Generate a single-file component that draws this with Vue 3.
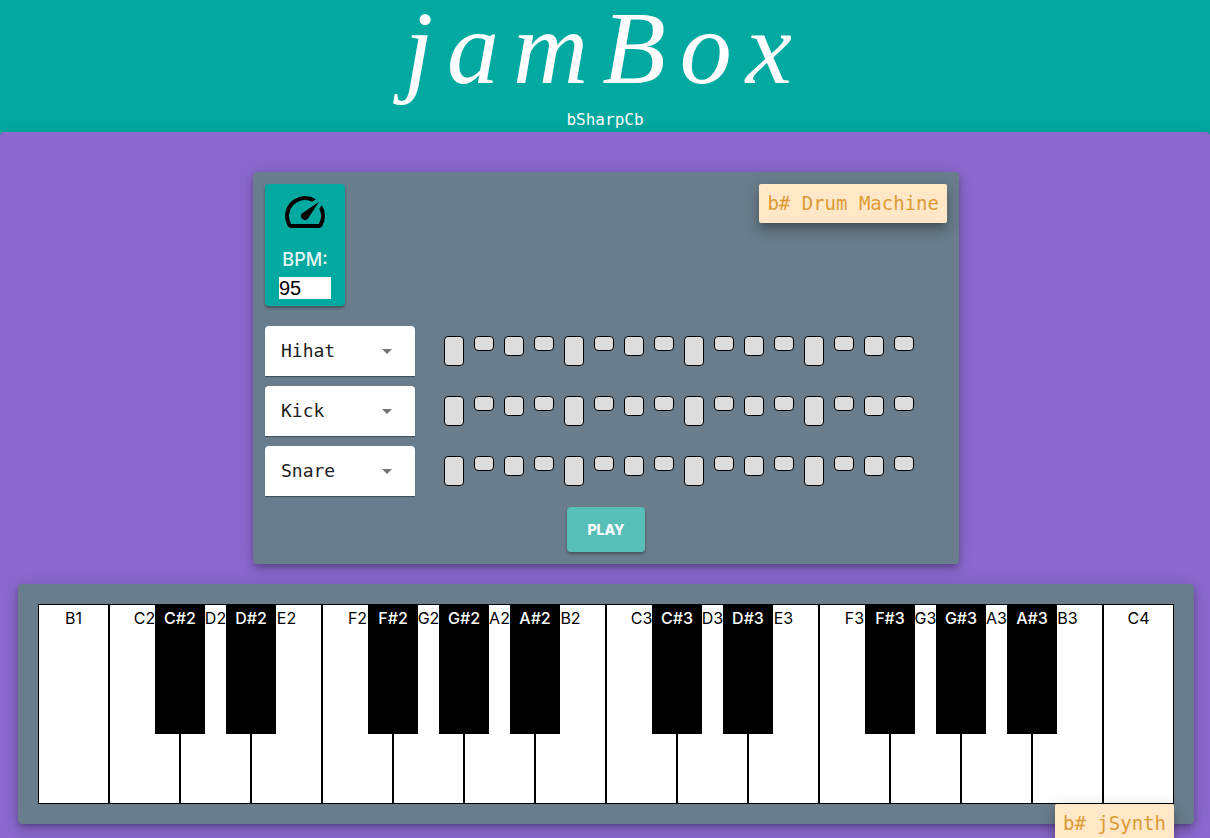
<script setup>
import { reactive, ref } from 'vue'

const bpm = ref(95)
const playing = ref(false)
const sounds = ['Hihat', 'Kick', 'Snare']
const beatSizes = ['long', 'short', 'mid', 'short']

const tracks = reactive(
  sounds.map((sound) => ({ sound, steps: Array(16).fill(false) }))
)

const naturals = [
  'B1', 'C2', 'D2', 'E2', 'F2', 'G2', 'A2', 'B2',
  'C3', 'D3', 'E3', 'F3', 'G3', 'A3', 'B3', 'C4'
]
const lastNote = naturals[naturals.length - 1]
const keys = naturals.map((note) => ({
  note,
  sharp: 'CDFGA'.includes(note[0]) && note !== lastNote ? `${note[0]}#${note[1]}` : null
}))
</script>

<template>
  <div class="app">
    <header class="header">
      <h1 class="logo">jamBox</h1>
      <p class="byline">bSharpCb</p>
    </header>

    <main class="main">
      <section class="panel drums">
        <div class="drums-top">
          <div class="tempo">
            <svg class="tempo-icon" viewBox="0 0 24 24" aria-hidden="true">
              <path d="m20.38 8.57-1.23 1.85a8 8 0 0 1-.22 7.58H5.07A8 8 0 0 1 15.58 6.85l1.85-1.23A10 10 0 0 0 3.35 19a2 2 0 0 0 1.72 1h13.85a2 2 0 0 0 1.74-1 10 10 0 0 0-.27-10.44zm-9.79 6.84a2 2 0 0 0 2.83 0l5.66-8.49-8.49 5.66a2 2 0 0 0 0 2.83z" />
            </svg>
            <label class="tempo-label" for="bpm">BPM:</label>
            <input id="bpm" v-model="bpm" class="tempo-input" type="number" />
          </div>
          <h2 class="tag">b# Drum Machine</h2>
        </div>

        <div class="tracks">
          <div v-for="(track, t) in tracks" :key="t" class="track">
            <div class="sound">
              <select v-model="track.sound" class="sound-select" :aria-label="`Sound ${t + 1}`">
                <option v-for="s in sounds" :key="s">{{ s }}</option>
              </select>
              <svg class="sound-arrow" viewBox="0 0 24 24" aria-hidden="true">
                <path d="M7 10l5 5 5-5z" />
              </svg>
            </div>
            <div class="steps">
              <button
                v-for="(on, i) in track.steps"
                :key="i"
                type="button"
                class="step"
                :class="[beatSizes[i % 4], { on }]"
                :aria-label="`Track ${t + 1} step ${i + 1}`"
                @click="track.steps[i] = !on"
              ></button>
            </div>
          </div>
        </div>

        <button type="button" class="play" @click="playing = !playing">PLAY</button>
      </section>

      <section class="panel synth">
        <div class="keyboard">
          <div v-for="k in keys" :key="k.note" class="slot">
            <button type="button" class="key">{{ k.note }}</button>
            <button v-if="k.sharp" type="button" class="sharp">{{ k.sharp }}</button>
          </div>
        </div>
        <h2 class="tag synth-tag">b# jSynth</h2>
      </section>
    </main>
  </div>
</template>

<style>
body {
  margin: 0;
  background: #8b68ce;
}
</style>

<style scoped>
.app {
  min-height: 100vh;
  display: flex;
  flex-direction: column;
  background: #02a9a1;
  font-family: Inter, "Liberation Sans", sans-serif;
}

.header {
  display: flex;
  flex-direction: column;
  align-items: center;
  gap: 12px;
  color: #fff;
}

.logo {
  margin: 0;
  font: italic 400 104px/96px "Liberation Serif", serif;
  letter-spacing: 14px;
}

.byline {
  margin: 0;
  font: 16px/24px "DejaVu Sans Mono", monospace;
}

.main {
  flex: 1;
  display: flex;
  flex-direction: column;
  align-items: center;
  gap: 20px;
  padding: 40px 16px 14px 18px;
  background: #8b68ce;
  border-radius: 4px 4px 0 0;
  box-shadow: 0 3px 5px -1px rgba(0, 0, 0, 0.2), 0 6px 10px rgba(0, 0, 0, 0.14),
    0 1px 18px rgba(0, 0, 0, 0.12);
}

.panel {
  box-sizing: border-box;
  border-radius: 4px;
  background: #6a7d8c;
  box-shadow: 0 3px 5px -1px rgba(0, 0, 0, 0.2), 0 6px 10px rgba(0, 0, 0, 0.14),
    0 1px 18px rgba(0, 0, 0, 0.12);
}

.drums {
  display: flex;
  flex-direction: column;
  padding: 12px;
}

.drums-top {
  display: flex;
  justify-content: space-between;
  align-items: flex-start;
}

.tempo {
  box-sizing: border-box;
  width: 80px;
  display: flex;
  flex-direction: column;
  align-items: center;
  padding: 4px 0 7px;
  border-radius: 4px;
  background: #02a9a1;
  box-shadow: 0 2px 3px rgba(0, 0, 0, 0.35);
}

.tempo-icon {
  width: 48px;
  height: 48px;
}

.tempo-label {
  padding: 10px 0 4px;
  color: #e8f6f5;
  font-size: 18px;
  font-weight: 500;
  line-height: 27px;
}

.tempo-input {
  box-sizing: border-box;
  width: 52px;
  height: 22px;
  padding: 0;
  border: 0;
  background: #fff;
  color: #000;
  font: 20px/22px "Liberation Sans", Arial, sans-serif;
  appearance: textfield;
}

.tempo-input::-webkit-inner-spin-button {
  appearance: none;
  margin: 0;
}

.tag {
  margin: 0;
  padding: 0 8px;
  border-radius: 2px;
  background: #ffe7c8;
  color: #dd9b34;
  font: 19px/39px "DejaVu Sans Mono", monospace;
  box-shadow: 0 5px 6px -3px rgba(0, 0, 0, 0.2), 0 9px 12px 1px rgba(0, 0, 0, 0.14),
    0 3px 16px 2px rgba(0, 0, 0, 0.12);
}

.tracks {
  display: flex;
  flex-direction: column;
  gap: 10px;
  margin: 20px 0 11px;
}

.track {
  display: flex;
  align-items: flex-start;
}

.sound {
  position: relative;
  width: 150px;
}

.sound-select {
  display: block;
  width: 100%;
  height: 50px;
  padding: 0 16px;
  border: 0;
  border-radius: 4px 4px 0 0;
  background: #fff;
  color: #212121;
  font: 18px/24px "DejaVu Sans Mono", monospace;
  appearance: none;
  box-shadow: 0 1px 1px rgba(0, 0, 0, 0.4);
}

.sound-arrow {
  position: absolute;
  top: 13px;
  right: 16px;
  width: 24px;
  height: 24px;
  fill: #757575;
  pointer-events: none;
}

.steps {
  display: flex;
  align-items: flex-start;
  gap: 10px;
  padding: 10px 33px 0 29px;
}

.step {
  box-sizing: border-box;
  width: 20px;
  padding: 0;
  border: 1px solid #000;
  border-radius: 4px;
  background: #dcdcdc;
}

.step.long {
  height: 30px;
}

.step.mid {
  height: 20px;
}

.step.short {
  height: 15px;
}

.step.on {
  background: #ffb74d;
}

.play {
  align-self: center;
  width: 78px;
  height: 45px;
  border: 0;
  border-radius: 4px;
  background: #58beb8;
  color: #fff;
  font: 800 14px/24px Inter, sans-serif;
  box-shadow: 0 2px 3px rgba(0, 0, 0, 0.35);
}

.synth {
  position: relative;
  align-self: stretch;
  padding: 20px;
}

.keyboard {
  display: flex;
}

.slot {
  position: relative;
  flex: 1;
}

.key,
.sharp {
  display: flex;
  justify-content: center;
  align-items: flex-start;
  padding: 0;
  font: 500 16px/26px Inter, sans-serif;
}

.key {
  width: 100%;
  height: 200px;
  border: 1px solid #000;
  background: #fff;
  color: #000;
  font-weight: 400;
}

.sharp {
  position: absolute;
  top: 0;
  right: -25px;
  z-index: 1;
  width: 50px;
  height: 130px;
  border: 1px solid #000;
  background: #000;
  color: #fff;
}

.synth-tag {
  position: absolute;
  top: 220px;
  right: 20px;
}
</style>
